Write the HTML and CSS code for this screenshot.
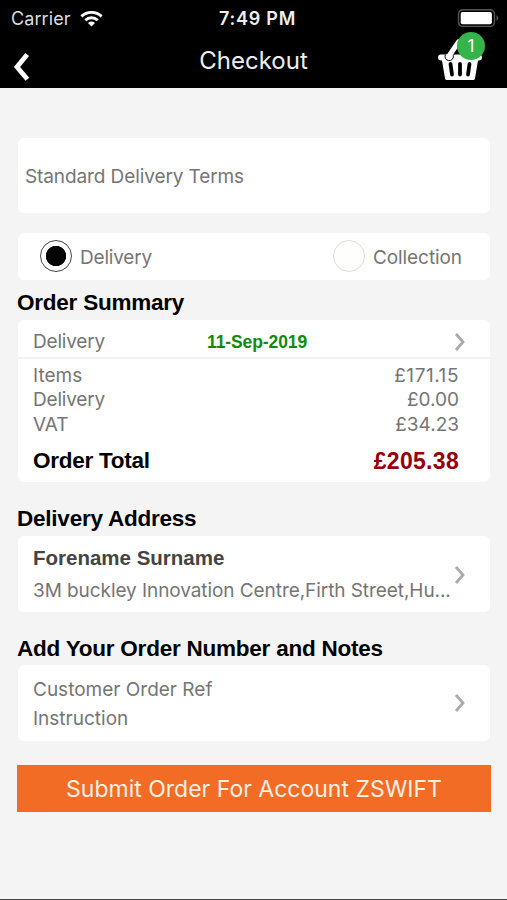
FILE: index.html
```html
<!DOCTYPE html>
<html lang="en">
<head>
<meta charset="utf-8">
<title>Checkout</title>
<link rel="stylesheet" href="styles.css">
</head>
<body>
<header class="header">
  <div class="status">
    <div class="status-left">
      <span class="carrier">Carrier</span>
      <svg class="wifi" width="23" height="17" viewBox="0 0 23 17">
        <g fill="none" stroke="#fff" stroke-width="2.9">
          <path d="M1.400 6.400a14.600 14.600 0 0 1 20.200 0"/>
          <path d="M5.300 10.200a9 9 0 0 1 12.400 0"/>
        </g>
        <path fill="#fff" d="M8 13a5.100 5.100 0 0 1 7 0L11.500 16.400z"/>
      </svg>
    </div>
    <span class="time">7:49 PM</span>
    <div class="status-right">
      <svg width="42" height="19" viewBox="0 0 42 19">
        <rect x="1.500" y=".8" width="36" height="16.6" rx="4.2" fill="none" stroke="#555" stroke-width="1.4"/>
        <rect x="3.700" y="3" width="31.2" height="12.2" rx="2" fill="#fff"/>
        <path d="M39.500 6.3q1.800 1 1.800 2.8t-1.800 2.800z" fill="#555"/>
      </svg>
    </div>
  </div>
  <div class="nav">
    <svg class="back" width="18" height="30" viewBox="0 0 18 30">
      <path d="M15.200 2.500L5 15l10.400 12.300" fill="none" stroke="#fff" stroke-width="4.800"/>
    </svg>
    <h1 class="title">Checkout</h1>
    <div class="basket">
      <svg width="46" height="44" viewBox="0 0 46 44">
        <path d="M12 19L21.500 5" stroke="#fff" stroke-width="5" stroke-linecap="round"/>
        <path fill="#fff" d="M4 17.500H42a3 3 0 0 1 0 6H41L38 41.500Q37.600 43 36 43H10Q8.400 43 8 41.500L5 23.500H4a3 3 0 0 1 0-6z"/>
        <path d="M8.500 17.500a4.200 4.200 0 1 0 7.800 1L18 16" fill="#fff" stroke="#000" stroke-width="1"/>
        <g stroke="#000" stroke-width="3.800" stroke-linecap="round">
          <path d="M13.500 27L15 37.500M23 27V37.500M32.500 27L31 37.500"/>
        </g>
      </svg>
      <span class="badge">1</span>
    </div>
  </div>
</header>

<main class="content">
  <section class="card terms">Standard Delivery Terms</section>

  <section class="card method">
    <label class="option"><span class="radio radio-on"></span><span class="delivery">Delivery</span></label>
    <label class="option"><span class="radio"></span><span class="collection">Collection</span></label>
  </section>

  <h2 class="heading h-summary">Order Summary</h2>
  <section class="card summary">
    <div class="date-row">
      <span class="delivery">Delivery</span>
      <span class="date">11-Sep-2019</span>
      <svg class="chevron" width="12" height="20" viewBox="0 0 12 20"><path d="M2 2L9 10l-7 8"/></svg>
    </div>
    <div class="line"><span class="items">Items</span><span class="amount">£171.15</span></div>
    <div class="line"><span class="delivery">Delivery</span><span>£0.00</span></div>
    <div class="line vat"><span>VAT</span><span>£34.23</span></div>
    <div class="line total"><span>Order Total</span><span class="grand">£205.38</span></div>
  </section>

  <h2 class="heading h-address">Delivery Address</h2>
  <section class="card link-card">
    <div class="lines">
      <div class="name">Forename Surname</div>
      <div class="address">3M buckley Innovation Centre,Firth Street,Hu...</div>
    </div>
    <svg class="chevron" width="12" height="20" viewBox="0 0 12 20"><path d="M2 2L9 10l-7 8"/></svg>
  </section>

  <h2 class="heading h-notes">Add Your Order Number and Notes</h2>
  <section class="card link-card notes">
    <div class="lines">
      <div class="ref">Customer Order Ref</div>
      <div class="instruction">Instruction</div>
    </div>
    <svg class="chevron" width="12" height="20" viewBox="0 0 12 20"><path d="M2 2L9 10l-7 8"/></svg>
  </section>

  <button class="submit">Submit Order For Account ZSWIFT</button>
</main>
</body>
</html>
```
FILE: styles.css
```css
* { box-sizing: border-box; }
body {
  margin: 0;
  height: 900px;
  display: flex;
  flex-direction: column;
  overflow: hidden;
  background: #f4f4f4;
  border-bottom: 1px solid #444;
  font: 19px/24px Inter, "Liberation Sans", sans-serif;
  color: #757575;
  white-space: nowrap;
}
.header { height: 88px; flex: none; background: #000; color: #fff; }
.status {
  height: 36px;
  display: grid;
  grid-template-columns: 208px auto 1fr;
  align-items: center;
  padding: 0 8px 0 11px;
  font-size: 18px;
}
.status-left { display: flex; align-items: center; gap: 9px; }
.carrier { color: #ddd; letter-spacing: .1px; padding-top: 1px; }
.time { font-weight: 600; letter-spacing: .750px; color: #eee; padding-top: 1px; }
.status-right { display: flex; justify-content: flex-end; }
.nav {
  height: 52px;
  display: grid;
  grid-template-columns: 1fr auto 1fr;
  padding: 0 12px;
}
.back { margin-top: 16px; }
.title { margin: 11px 0 0; font-size: 24px; line-height: 28px; font-weight: 400; color: #eee; }
.basket { position: relative; justify-self: end; width: 46px; height: 44px; margin: 1px 12px 0 0; }
.badge {
  position: absolute;
  top: -5px;
  right: -2px;
  width: 28px;
  height: 28px;
  border-radius: 50%;
  background: #35b44a;
  color: #fff;
  font-size: 17px;
  line-height: 28px;
  text-align: center;
}
.content { padding: 50px 17px 0 18px; display: flex; flex-direction: column; }
.card { background: #fff; border-radius: 6px; width: 472px; }
.terms { height: 75px; line-height: 78px; padding-left: 7px; letter-spacing: -.1px; }
.method {
  height: 47px;
  margin-top: 20px;
  padding: 0 28px 0 22px;
  display: flex;
  align-items: center;
  justify-content: space-between;
}
.option { display: flex; align-items: center; gap: 8px; line-height: 26px; }
.option .delivery, .collection { padding-top: 2px; }
.delivery { letter-spacing: -.2px; }
.collection { letter-spacing: -.080px; }
.radio { width: 32px; height: 32px; margin-top: -1px; border-radius: 50%; border: 1.500px solid #ddd; background: #fefefd; }
.radio-on { border-color: #444; background: radial-gradient(circle, #000 9.800px, #fff 10.500px); }
.heading {
  font: bold 22.500px/28px "Liberation Sans", Arial, sans-serif;
  letter-spacing: -.230px;
  color: #000;
  margin: 0 0 0 -1px;
}
.h-summary { margin-top: 9px; }
.h-address { margin-top: 23px; }
.h-notes { margin-top: 23px; }
.summary { height: 162px; margin-top: 3px; }
.date-row {
  height: 39px;
  width: 480px;
  padding: 0 32px 0 15px;
  border-bottom: 2px solid #f2f2f2;
  display: grid;
  grid-template-columns: 174px 1fr auto;
  align-items: start;
  line-height: 43px;
}
.date { font: bold 17.500px/45px "Liberation Sans", Arial, sans-serif; letter-spacing: -.1px; color: #128a12; }
.chevron { fill: none; stroke: #aaa; stroke-width: 2.800; }
.date-row .chevron { margin-top: 12px; }
.line { display: flex; justify-content: space-between; padding: 0 31px 0 15px; line-height: 24px; }
.date-row + .line { padding-top: 5px; }
.line.vat { padding-top: 1px; }
.amount { letter-spacing: .550px; }
.line.total {
  font: bold 22.500px/28px "Liberation Sans", Arial, sans-serif;
  letter-spacing: -.270px;
  color: #000;
  padding-top: 10px;
}
.grand { color: #950008; font-size: 23px; letter-spacing: .3px; }
.link-card {
  height: 76px;
  margin-top: 3px;
  padding: 0 24px 0 15px;
  display: flex;
  align-items: center;
  justify-content: space-between;
}
.h-notes + .link-card { margin-top: 2px; }
.link-card .chevron { flex: none; margin-top: 2px; }
.notes .chevron { margin-top: 0; }
.lines { width: 421px; line-height: 32px; }
.name { font: bold 20.500px/32px "Liberation Sans", Arial, sans-serif; color: #444; }
.address { letter-spacing: -.070px; padding-top: 1px; }
.notes .lines { line-height: 28px; padding-top: 2px; }
.instruction { padding-top: 1px; }
.submit {
  width: 474px;
  height: 47px;
  margin: 24px 0 0 -1px;
  padding: 0;
  border: 0;
  background: #f36c25;
  color: #fff0e4;
  font: 23px/48px Inter, "Liberation Sans", sans-serif;
}
```
